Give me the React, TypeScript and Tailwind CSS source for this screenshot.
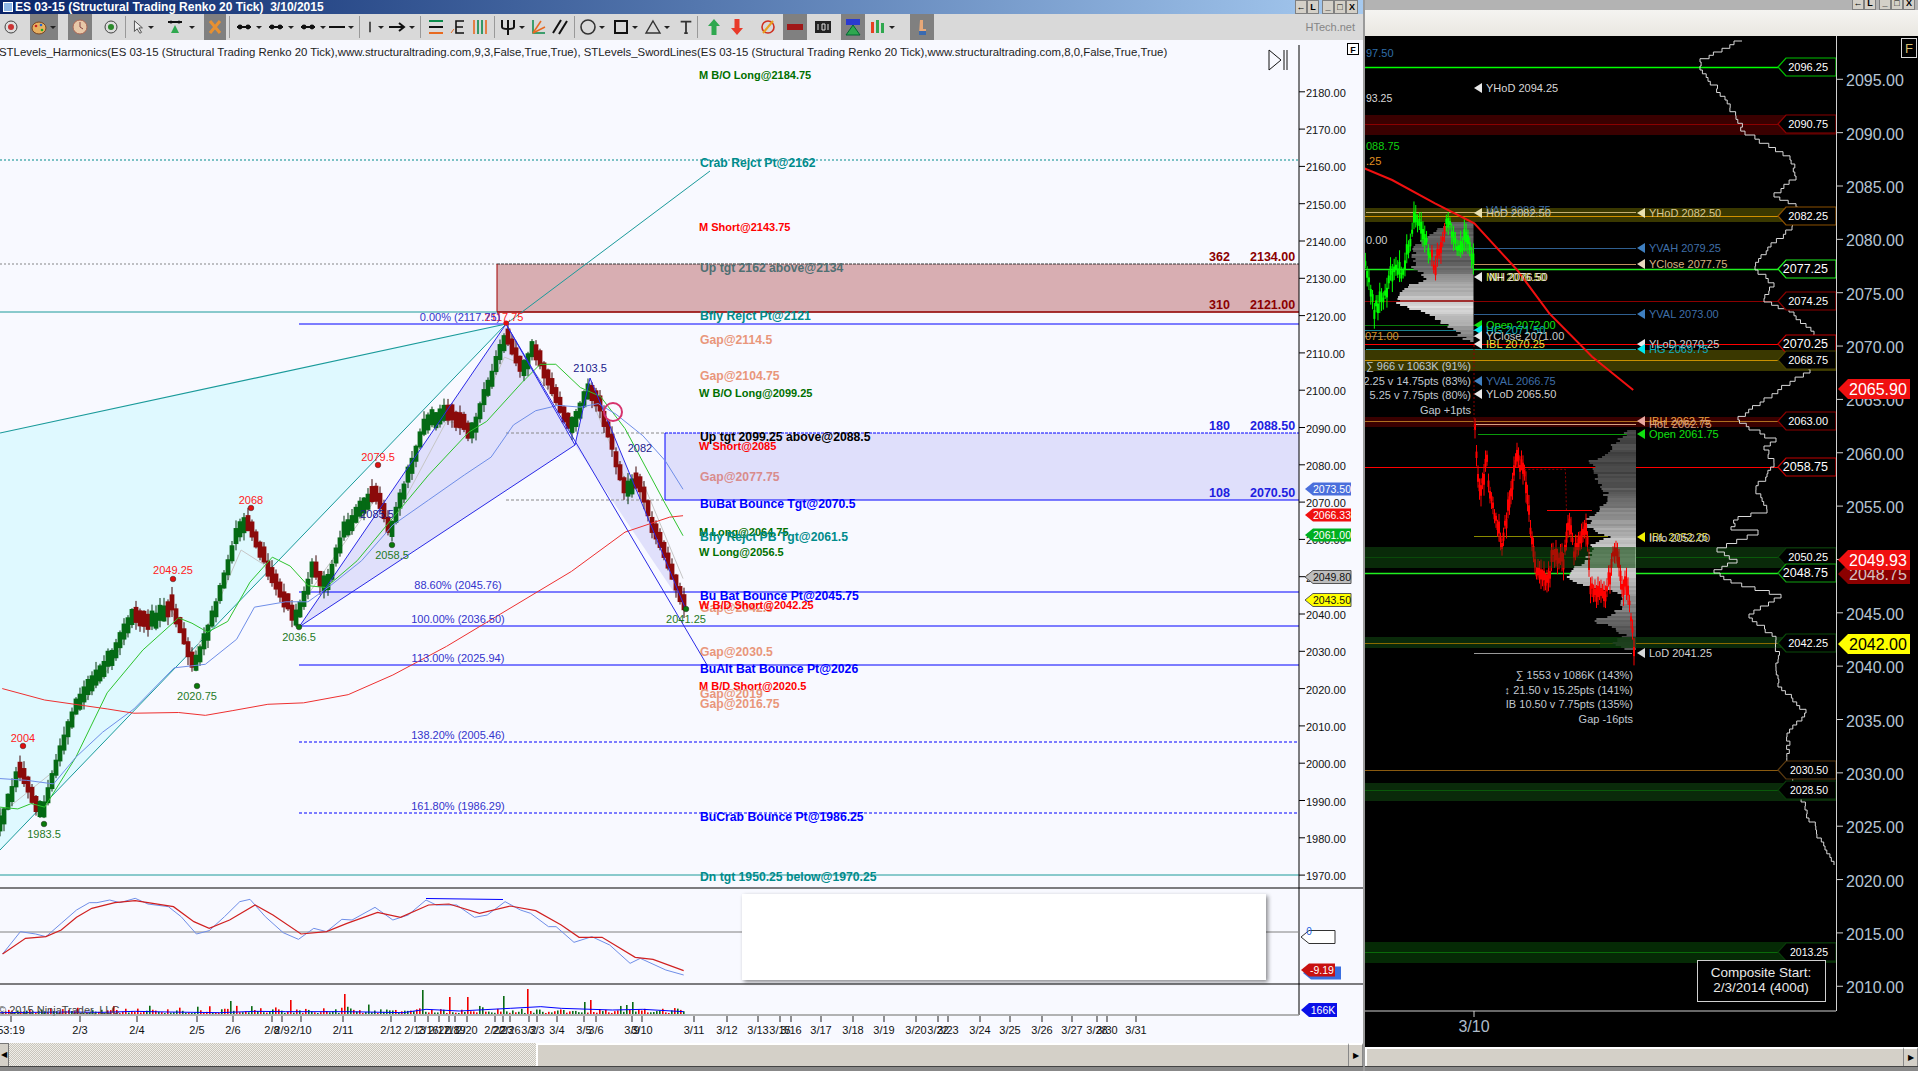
import React from 'react';

// seeded random so every render draws the same bars
const rng = (seed: number) => () => {
    seed = (seed * 1664525 + 1013904223) % 4294967296;
    return seed / 4294967296;
};

type Pt = [number, number];
const lerp = (pts: Pt[], x: number) => {
    for (let i = 1; i < pts.length; i++) {
        if (x <= pts[i][0]) {
            const [x0, y0] = pts[i - 1];
            const [x1, y1] = pts[i];
            return y0 + ((y1 - y0) * (x - x0)) / (x1 - x0 || 1);
        }
    }
    return pts[pts.length - 1][1];
};
const poly = (pts: Pt[]) => pts.map((p) => p.join(',')).join(' ');

// zoomed coords -> page coords
const L = (pts: Pt[]): Pt[] => pts.map(([x, y]) => [x / 2.24, 300 + y / 2.8]);
const O = (pts: Pt[]): Pt[] => pts.map(([x, y]) => [x / 1.96, 880 + y / 3]);
const R5 = (pts: Pt[]): Pt[] => pts.map(([x, y]) => [1360 + x / 2.8, 180 + y / 3]);
const R6 = (pts: Pt[]): Pt[] => pts.map(([x, y]) => [1360 + x / 2.8, 400 + y / 3]);

const priceY = (p: number) => 241 + (2140 - p) * 3.73;
const rightY = (p: number) => 186 + (2085 - p) * 10.67;

const pricePath = L([[0, 1470], [20, 1400], [45, 1310], [60, 1350], [95, 1440], [120, 1330], [170, 1140], [210, 1060], [250, 1000], [300, 880], [340, 900], [385, 850], [435, 1030], [470, 920], [530, 660], [560, 620], [610, 780], [665, 890], [705, 740], [730, 810], [770, 650], [840, 530], [875, 650], [950, 350], [1000, 310], [1060, 370], [1135, 90], [1170, 200], [1195, 130], [1280, 360], [1320, 240], [1345, 290], [1400, 530], [1430, 500], [1460, 620], [1530, 840], [1538, 860]]);

const candles = (() => {
    const r = rng(7);
    const out: { x: number; top: number; h: number; wt: number; wb: number; up: boolean }[] = [];
    for (let x = 0; x < 686; x += 4) {
        const y = lerp(pricePath, x);
        const up = lerp(pricePath, x + 6) < lerp(pricePath, x - 3);
        const yy = y + (r() - 0.5) * 6;
        out.push({ x, top: yy - 8, h: 16, wt: yy - 8 - r() * 8, wb: yy + 8 + r() * 8, up });
    }
    return out;
})();

const greenMa = L([[0, 1420], [40, 1425], [70, 1410], [100, 1420], [170, 1280], [240, 1100], [320, 980], [400, 890], [430, 905], [465, 930], [510, 900], [560, 790], [610, 720], [650, 745], [690, 800], [730, 805], [800, 730], [880, 610], [960, 490], [1050, 370], [1090, 340], [1170, 230], [1210, 180], [1245, 180], [1300, 245], [1345, 270], [1400, 360], [1490, 570], [1530, 660]]);
const blueMa = L([[0, 1340], [60, 1345], [120, 1355], [170, 1280], [230, 1210], [300, 1145], [390, 1030], [460, 1020], [530, 950], [570, 860], [640, 845], [690, 845], [740, 800], [810, 730], [880, 630], [960, 560], [1040, 490], [1100, 440], [1150, 350], [1200, 310], [1250, 295], [1300, 300], [1340, 290], [1380, 320], [1440, 380], [1490, 450], [1530, 530]]);
const redMa = L([[5, 1088], [100, 1120], [240, 1145], [300, 1157], [400, 1155], [460, 1163], [520, 1150], [600, 1132], [680, 1128], [780, 1105], [880, 1050], [1000, 970], [1120, 880], [1280, 760], [1400, 650], [1500, 608], [1530, 604]]);
const grayMa = L([[0, 1440], [120, 1320], [170, 1160], [250, 1020], [300, 900], [385, 870], [430, 1000], [470, 900], [540, 700], [590, 740], [660, 880], [720, 770], [840, 560], [880, 620], [1000, 340], [1060, 350], [1130, 160], [1190, 190], [1280, 340], [1320, 265], [1400, 500], [1440, 510], [1530, 780]]);

const oscBlue = O([[5, 222], [40, 155], [70, 162], [90, 170], [120, 130], [150, 90], [175, 68], [190, 68], [215, 60], [235, 68], [265, 55], [290, 72], [330, 80], [355, 110], [385, 162], [410, 152], [440, 110], [470, 65], [490, 58], [520, 110], [555, 158], [585, 178], [615, 145], [640, 155], [670, 118], [690, 120], [735, 82], [770, 120], [800, 105], [835, 60], [855, 75], [895, 75], [930, 112], [955, 105], [990, 65], [1020, 90], [1040, 100], [1075, 140], [1090, 140], [1125, 187], [1160, 170], [1195, 195], [1235, 250], [1255, 235], [1305, 270], [1340, 285]]);
const oscRed = O([[5, 222], [50, 175], [90, 170], [120, 150], [150, 112], [180, 85], [225, 68], [265, 62], [340, 80], [380, 125], [410, 145], [450, 120], [500, 75], [535, 105], [590, 162], [640, 155], [680, 130], [740, 97], [785, 112], [840, 75], [880, 72], [940, 100], [1000, 78], [1050, 92], [1100, 135], [1135, 172], [1180, 172], [1245, 232], [1280, 238], [1340, 272]]);

const volumes = (() => {
    const r = rng(21);
    const spikes: Record<number, [number, boolean]> = { 112: [8, false], 230: [13, true], 289: [14, false], 343: [20, false], 422: [24, true], 449: [17, false], 467: [17, false], 502: [18, true], 527: [25, false], 589: [14, false], 584: [12, true], 632: [12, true] };
    const out: { x: number; h: number; up: boolean }[] = [];
    for (let x = 2; x < 685; x += 3) {
        const k = Object.keys(spikes).find((s) => Math.abs(Number(s) - x) < 1.6);
        if (k) out.push({ x, h: spikes[Number(k)][0], up: spikes[Number(k)][1] });
        else out.push({ x, h: 1 + r() * r() * 9, up: r() > 0.5 });
    }
    return out;
})();

const dates: [number, string][] = [[11, '53:19'], [80, '2/3'], [137, '2/4'], [197, '2/5'], [233, '2/6'], [272, '2/8'], [282, '2/9'], [301, '2/10'], [343, '2/11'], [391, '2/12'], [415, '2/13'], [428, '2/16'], [439, '2/17'], [449, '2/18'], [455, '2/19'], [467, '2/20'], [495, '2/22'], [503, '2/23'], [510, '2/26'], [529, '3/2'], [537, '3/3'], [557, '3/4'], [584, '3/5'], [596, '3/6'], [632, '3/9'], [642, '3/10'], [694, '3/11'], [727, '3/12'], [758, '3/13'], [780, '3/15'], [791, '3/16'], [821, '3/17'], [853, '3/18'], [884, '3/19'], [916, '3/20'], [938, '3/22'], [948, '3/23'], [980, '3/24'], [1010, '3/25'], [1042, '3/26'], [1072, '3/27'], [1097, '3/28'], [1107, '3/30'], [1136, '3/31']];

const GAP = '#e9967a';
const TEAL = '#008b8b';
const GRN = '#007000';
const RED = '#ff0000';
const BLU = '#0000ff';
const chartLabels: [number, number, string, string][] = [
    [699, 75, 'M B/O Long@2184.75', GRN],
    [700, 163, 'Crab Rejct Pt@2162', TEAL],
    [699, 227, 'M Short@2143.75', RED],
    [700, 268, 'Up tgt 2162 above@2134', '#4f6f72'],
    [700, 316, 'Bfly Rejct Pt@2121', TEAL],
    [700, 340, 'Gap@2114.5', GAP],
    [700, 376, 'Gap@2104.75', GAP],
    [699, 393, 'W B/O Long@2099.25', GRN],
    [700, 437, 'Up tgt 2099.25 above@2088.5', '#000000'],
    [699, 446, 'W Short@2085', RED],
    [700, 477, 'Gap@2077.75', '#d98c8c'],
    [700, 504, 'BuBat Bounce Tgt@2070.5', BLU],
    [699, 532, 'M Long@2064.75', GRN],
    [700, 537, 'Bfly Rejct PB Tgt@2061.5', TEAL],
    [699, 552, 'W Long@2056.5', GRN],
    [700, 608, 'Gap@2042.5', GAP],
    [700, 596, 'Bu Bat Bounce Pt@2045.75', BLU],
    [699, 605, 'W B/D Short@2042.25', RED],
    [700, 652, 'Gap@2030.5', GAP],
    [700, 669, 'BuAlt Bat Bounce Pt@2026', BLU],
    [699, 686, 'M B/D Short@2020.5', RED],
    [700, 694, 'Gap@2019', GAP],
    [700, 704, 'Gap@2016.75', GAP],
    [700, 817, 'BuCrab Bounce Pt@1986.25', BLU],
    [700, 877, 'Dn tgt 1950.25 below@1970.25', TEAL],
];
const fibs: [number, string, boolean][] = [
    [592, '88.60% (2045.76)', false],
    [626, '100.00% (2036.50)', false],
    [665, '113.00% (2025.94)', false],
    [742, '138.20% (2005.46)', true],
    [813, '161.80% (1986.29)', true],
];
const swings: [number, number, string, string, number][] = [
    [378, 457, '2079.5', '#ff2020', 465],
    [251, 500, '2068', '#ff2020', 508],
    [173, 570, '2049.25', '#ff2020', 579],
    [23, 738, '2004', '#ff2020', 746],
    [392, 555, '2058.5', '#1f7a1f', 545],
    [197, 696, '2020.75', '#1f7a1f', 686],
    [299, 637, '2036.5', '#1f7a1f', 627],
    [44, 834, '1983.5', '#1f7a1f', 824],
    [686, 619, '2041.25', '#1f7a1f', 609],
];

const Tag = ({ x, y, w, h, fill, stroke, text, color, fs }: { x: number; y: number; w: number; h: number; fill: string; stroke?: string; text: string; color: string; fs: number }) => (
    <g>
        <polygon points={`${x},${y} ${x + 8},${y - h / 2} ${x + w},${y - h / 2} ${x + w},${y + h / 2} ${x + 8},${y + h / 2}`} fill={fill} stroke={stroke ?? 'none'} />
        <text x={x + (w + 8) / 2} y={y + fs * 0.36} fontSize={fs} fill={color} textAnchor="middle">{text}</text>
    </g>
);

const LeftChart = () => (
    <svg viewBox="0 40 1363 1003" className="block h-full w-full">
        <polygon points="0,433 506,324 0,850" fill="#dff9ff" />
        <polygon points={poly([[299, 627], [506, 324], [575, 445]])} fill="#e0e0fb" />
        <polygon points={poly([[590, 378], [575, 445], [686, 610]])} fill="#e0e0fb" />
        <rect x="497" y="264" width="802" height="48" fill="#d8aeb2" />
        <rect x="665" y="433" width="634" height="67" fill="#dfdffb" />

        <line x1="0" y1="160" x2="1299" y2="160" stroke={TEAL} strokeDasharray="2 2" />
        <line x1="0" y1="264" x2="497" y2="264" stroke="#555" strokeDasharray="2 2" strokeWidth="0.7" />
        <line x1="497" y1="264" x2="1299" y2="264" stroke="#333" strokeDasharray="3 1" />
        <line x1="497" y1="264" x2="497" y2="312" stroke="#a00000" />
        <line x1="0" y1="312" x2="1299" y2="312" stroke="#1a9a9a" />
        <line x1="497" y1="312" x2="1299" y2="312" stroke="#b00000" strokeWidth="1.5" />
        <line x1="299" y1="324" x2="1299" y2="324" stroke={BLU} />
        <line x1="506" y1="433" x2="665" y2="433" stroke="#888" strokeDasharray="3 2" />
        <line x1="506" y1="500" x2="665" y2="500" stroke="#888" strokeDasharray="3 2" />
        <line x1="665" y1="433" x2="1299" y2="433" stroke={BLU} strokeDasharray="3 1" />
        <line x1="665" y1="500" x2="1299" y2="500" stroke={BLU} />
        <line x1="665" y1="433" x2="665" y2="500" stroke={BLU} />
        {fibs.map(([y, , dash]) => (
            <line key={y} x1="299" y1={y} x2="1299" y2={y} stroke={BLU} strokeDasharray={dash ? '3 2' : undefined} />
        ))}
        <line x1="0" y1="875" x2="1299" y2="875" stroke="#1a9a9a" />

        <line x1="0" y1="433" x2="506" y2="324" stroke="#1a9a9a" strokeWidth="1.2" />
        <polyline points="0,850 506,324 710,171" fill="none" stroke="#1a9a9a" />

        <polyline points={poly(grayMa)} fill="none" stroke="#c6c6c6" />
        {candles.map((c, i) => (
            <g key={i}>
                <line x1={c.x} y1={c.wt} x2={c.x} y2={c.wb} stroke={c.up ? '#04340c' : '#3a0505'} />
                <rect x={c.x - 2.4} y={c.top} width="4.8" height={c.h} fill={c.up ? '#046a14' : '#8b0a0a'} />
            </g>
        ))}
        <polyline points={poly(greenMa)} fill="none" stroke="#2ec42e" />
        <polyline points={poly(blueMa)} fill="none" stroke="#6f8ee8" />
        <polyline points={poly(redMa)} fill="none" stroke="#ee3030" />

        <polyline points={poly([[299, 627], [506, 324], [575, 445], [299, 627]])} fill="none" stroke="#2a2ae6" />
        <polyline points={poly([[506, 324], [707, 665]])} fill="none" stroke="#2a2ae6" />
        <polyline points={poly([[575, 445], [590, 378], [686, 610]])} fill="none" stroke="#2a2ae6" />
        <circle cx="613" cy="412" r="9" fill="none" stroke="#d6336c" strokeWidth="2" />

        <circle cx="506" cy="323" r="2.6" fill="#e01010" />
        {swings.map(([x, y, t, c, dy]) => (
            <g key={t}>
                <circle cx={x} cy={dy} r="2.8" fill={c === '#ff2020' ? '#e01010' : '#0a7a0a'} stroke="#222" strokeWidth="0.5" />
                <text x={x} y={y + 4} fontSize="11" fill={c} textAnchor="middle">{t}</text>
            </g>
        ))}
        <text x="504" y="321" fontSize="11" fill="#ff2020" textAnchor="middle">2117.75</text>
        <text x="590" y="372" fontSize="11" fill="#20208c" textAnchor="middle">2103.5</text>
        <text x="640" y="452" fontSize="11" fill="#20208c" textAnchor="middle">2082</text>
        <text x="377" y="518" fontSize="11" fill="#20208c" textAnchor="middle">2085.5</text>
        <text x="460" y="321" fontSize="11" fill="#3333cc" textAnchor="middle">0.00% (2117.75)</text>
        {fibs.map(([y, t]) => (
            <text key={t} x="458" y={y - 3} fontSize="11" fill="#3333cc" textAnchor="middle">{t}</text>
        ))}

        {chartLabels.map(([x, y, t, c]) => (
            <text key={t} x={x} y={y + 4} fontSize={x === 700 ? 12.2 : 11} fontWeight="700" fill={c}>{t}</text>
        ))}

        {[[362, '2134.00', 256, '#8b0000'], [310, '2121.00', 304, '#8b0000'], [180, '2088.50', 425, '#2020e0'], [108, '2070.50', 492, '#2020e0']].map(([n, p, y, c]) => (
            <g key={String(p)} fontSize="12.5" fontWeight="700" fill={String(c)}>
                <text x="1209" y={Number(y) + 5}>{n}</text>
                <text x="1250" y={Number(y) + 5}>{p}</text>
            </g>
        ))}

        {/* price axis */}
        <line x1="1299" y1="45" x2="1299" y2="1015" stroke="#000" />
        {Array.from({ length: 22 }, (_, i) => 2180 - i * 10).map((p) => (
            <g key={p}>
                <line x1="1299" y1={priceY(p)} x2="1305" y2={priceY(p)} stroke="#000" />
                <text x="1306" y={priceY(p) + 5} fontSize="11" fill="#111">{p}.00</text>
            </g>
        ))}
        <Tag x={1305} y={489} w={46} h={13} fill="#4a6fdc" text="2073.50" color="#fff" fs={10.5} />
        <Tag x={1305} y={515} w={46} h={13} fill="#f01010" text="2066.33" color="#fff" fs={10.5} />
        <Tag x={1305} y={535} w={46} h={13} fill="#00b020" text="2061.00" color="#fff" fs={10.5} />
        <Tag x={1305} y={577} w={46} h={13} fill="#bdbdbd" stroke="#555" text="2049.80" color="#111" fs={10.5} />
        <Tag x={1305} y={600} w={46} h={13} fill="#ffff00" stroke="#555" text="2043.50" color="#111" fs={10.5} />

        {/* skip to end and F */}
        <polygon points="1269,50 1281,60 1269,70" fill="none" stroke="#111" />
        <line x1="1284" y1="50" x2="1284" y2="70" stroke="#111" />
        <line x1="1287" y1="50" x2="1287" y2="70" stroke="#111" />
        <rect x="1347.5" y="43.5" width="11" height="11" fill="#fff" stroke="#000" />
        <text x="1353" y="52.5" fontSize="9" textAnchor="middle" fill="#000" fontWeight="700">F</text>

        {/* oscillator panel */}
        <line x1="0" y1="888" x2="1363" y2="888" stroke="#000" strokeWidth="1.2" />
        <line x1="0" y1="932" x2="1300" y2="932" stroke="#808080" />
        <rect x="742" y="894" width="524" height="86" fill="#fff" className="drop-shadow-[2px_2px_2px_rgba(0,0,0,0.45)]" />
        <line x1="426" y1="898.5" x2="503" y2="899.5" stroke={BLU} />
        <polyline points={poly(oscBlue)} fill="none" stroke="#6f8ee8" />
        <polyline points={poly(oscRed)} fill="none" stroke="#d02020" strokeWidth="1.2" />
        <Tag x={1301} y={937} w={34} h={13} fill="#fff" stroke="#333" text="" color="#2060e0" fs={10} />
        <text x="1309" y="935" fontSize="10" fill="#2060e0" textAnchor="middle">0</text>
        <Tag x={1303} y={973} w={38} h={13} fill="#3a6fe0" text="" color="#fff" fs={10} />
        <Tag x={1301} y={970} w={34} h={13} fill="#c81010" text="-9.19" color="#fff" fs={10.5} />

        {/* volume panel */}
        <line x1="0" y1="984" x2="1363" y2="984" stroke="#000" strokeWidth="1.2" />
        {volumes.map((v, i) => (
            <rect key={i} x={v.x} y={1014 - v.h} width="1.6" height={v.h} fill={v.up ? '#0a6a14' : '#f00000'} />
        ))}
        <polyline points={poly(O([[0, 398], [130, 396], [200, 397], [265, 394], [330, 396], [430, 398], [500, 394], [560, 395], [680, 395], [790, 398], [835, 388], [900, 393], [1000, 385], [1060, 380], [1100, 385], [1200, 390], [1260, 388], [1340, 395]]))} fill="none" stroke={BLU} />
        <text x="-2" y="1014" fontSize="11" fill="#444">© 2015 NinjaTrader, LLC</text>
        <Tag x={1301} y={1010} w={36} h={14} fill="#0a10e8" text="166K" color="#fff" fs={10.5} />

        {/* date axis */}
        <line x1="0" y1="1015" x2="1299" y2="1015" stroke="#9a9a9a" strokeWidth="1.4" />
        {dates.map(([x, t]) => (
            <g key={t}>
                <line x1={x} y1="1016" x2={x} y2="1022" stroke="#222" />
                <text x={x} y="1034" fontSize="11" fill="#111" textAnchor="middle">{t}</text>
            </g>
        ))}
    </svg>
);

// volume profile bars from an outline of left edges
const Profile = ({ edge, right, top, bottom, dark, light }: { edge: Pt[]; right: number; top: number; bottom: number; dark: number; light: number }) => {
    const bars = [];
    const r = rng(top);
    const center = top + (bottom - top) * light;
    for (let y = top; y < bottom; y += 2) {
        const left = lerp(edge.map(([a, b]): Pt => [b, a]), y) + (r() - 0.5) * 7;
        const t = Math.max(0, 1 - Math.abs(y - center) / ((bottom - top) * 0.35));
        const v = Math.round(dark + t * (225 - dark) + (r() - 0.5) * 24);
        bars.push(<rect key={y} x={left} y={y} width={right - left} height="2" fill={`rgb(${v},${v},${v})`} />);
    }
    return <g>{bars}</g>;
};

const sticks = (pts: Pt[], color: (x: number) => string, seed: number, step: number) => {
    const r = rng(seed);
    const out = [];
    for (let x = pts[0][0]; x <= pts[pts.length - 1][0]; x += step) {
        const y = lerp(pts, x) + (r() - 0.5) * 12;
        const h = 4 + r() * 8;
        out.push(
            <g key={x}>
                <line x1={x} y1={y - h - r() * 6} x2={x} y2={y + h + r() * 6} stroke={color(x)} />
                <rect x={x - 1} y={y - h / 2} width="2" height={h} fill={color(x)} />
            </g>,
        );
    }
    return out;
};

const stepped = (pts: Pt[], seed: number) => {
    const r = rng(seed);
    let d = `M${pts[0][0]} ${pts[0][1]}`;
    for (let i = 1; i < pts.length; i++) {
        const [x0, y0] = pts[i - 1];
        const [x1, y1] = pts[i];
        const n = Math.max(1, Math.round(Math.abs(y1 - y0) / 4));
        for (let k = 1; k <= n; k++) {
            const xx = x0 + ((x1 - x0) * k) / n + (k < n ? (r() - 0.5) * 5 : 0);
            d += `H${xx.toFixed(1)}V${(y0 + ((y1 - y0) * k) / n).toFixed(1)}`;
        }
    }
    return d;
};

const compositeProfile: Pt[] = [[1742, 41], [1722, 52], [1700, 62], [1700, 70], [1725, 100], [1745, 135], [1790, 160], [1796, 180], [1774, 197], [1796, 207], [1792, 230], [1771, 247], [1755, 270], [1774, 287], [1764, 302], [1789, 312], [1814, 335], [1810, 373], [1764, 402], [1738, 420], [1749, 430], [1776, 442], [1764, 450], [1774, 467], [1767, 477], [1756, 490], [1767, 513], [1738, 520], [1731, 530], [1758, 535], [1717, 552], [1737, 563], [1714, 573], [1731, 583], [1781, 598], [1749, 618], [1776, 640], [1778, 663], [1778, 687], [1806, 713], [1787, 737], [1790, 770], [1805, 810], [1825, 850], [1834, 865]];

const bands: [number, number, string][] = [
    [115, 135, '#3a0000'], [208, 222, '#3a3800'], [350, 371, '#3a3800'], [417, 427, '#3a0000'], [547, 568, '#0a2a0a'], [637, 648, '#0a2a0a'], [783, 801, '#0a2a0a'], [942, 963, '#052a05'],
];
const rLines: [number, string, number?, number?][] = [
    [67, '#00ff00'], [124, '#8b0000'], [216, '#d09000'], [269, '#20f020'], [301, '#8b0000'], [344, '#ff0000'], [360, '#c89000'], [421, '#b07020'], [467, '#ff0000'], [557, '#0a5a0a'], [573, '#20f020'], [643, '#8a6a00'], [770, '#8a5a10'], [790, '#0a5a0a'], [952, '#0a6a0a'],
    [212, '#c8b070', 1366, 1636], [248, '#2f5f90', 1474, 1636], [264, '#c09060', 1474, 1636], [314, '#2f5f90', 1474, 1636], [349, '#20a0a0', 1366, 1636], [325, '#0a7a0a', 1365, 1476], [330, '#1a8090', 1365, 1476], [336, '#777', 1365, 1476], [424, '#d8a080', 1476, 1636], [434, '#0a9a0a', 1478, 1627], [536, '#8a8a00', 1474, 1608], [653, '#999', 1474, 1632], [510, '#ff0000', 1547, 1592],
];
const rTags: [number, string, string, string, number][] = [
    [67, '2096.25', '#00c000', '#000', 11], [124, '2090.75', '#8b0000', '#000', 11], [216, '2082.25', '#8b5000', '#000', 11], [269, '2077.25', '#20f020', '#000', 12.5], [301, '2074.25', '#8b0000', '#000', 11], [344, '2070.25', '#c00000', '#000', 12.5], [360, '2068.75', '#4a4500', '#000', 11], [421, '2063.00', '#8b0000', '#000', 11], [467, '2058.75', '#c00000', '#000', 12.5], [557, '2050.25', '#0a3a0a', '#000', 11], [573, '2048.75', '#10a010', '#000', 12.5], [643, '2042.25', '#0a4a0a', '#000', 11], [770, '2030.50', '#5a3a10', '#000', 10.5], [790, '2028.50', '#0a3a0a', '#000', 10.5], [952, '2013.25', '#0a3a0a', '#000', 10.5],
];
const rLabels: [number, number, string, string, string?][] = [
    [1487, 88, 'YHoD 2094.25', '#d8d8d8', '#e8e8e8'],
    [1650, 213, 'YHoD 2082.50', '#d8c890', '#e8e0b0'],
    [1487, 210, 'VAH 2082.75', '#3f6fa8'],
    [1487, 213, 'HoD 2082.50', '#d8c890', '#e8e0b0'],
    [1650, 248, 'YVAH 2079.25', '#3f6fa8', '#3f7fc0'],
    [1650, 264, 'YClose 2077.75', '#d8b080', '#e8d8c0'],
    [1487, 277, 'MH 2076.50', '#e8e040', '#e8e8e8'],
    [1490, 277, 'NH 2076.50', '#e8e8e8'],
    [1650, 314, 'YVAL 2073.00', '#3f6fa8', '#3f7fc0'],
    [1487, 325, 'Open 2072.00', '#10e010', '#10e010'],
    [1487, 330, 'HG 2071.50', '#10b0c0', '#00e8f0'],
    [1487, 336, 'YClose 2071.00', '#c8c8c8', '#e8e8e8'],
    [1487, 344, 'IBL 2070.25', '#e8e040', '#e8e8e8'],
    [1650, 344, 'YLoD 2070.25', '#d0d0d0', '#e8e8e8'],
    [1650, 349, 'HG 2069.75', '#10b0c0', '#00e8f0'],
    [1487, 381, 'YVAL 2066.75', '#3f6fa8', '#3f7fc0'],
    [1487, 394, 'YLoD 2065.50', '#d0d0d0', '#e8e8e8'],
    [1650, 421, 'IBH 2062.75', '#e8a040', '#e8a8a0'],
    [1650, 424, 'HoL 2062.75', '#d8a080'],
    [1650, 434, 'Open 2061.75', '#10e010', '#10e010'],
    [1650, 537, 'IBL 2052.25', '#e8e040', '#f0f000'],
    [1650, 538, 'Info 2052.00', '#c8c8c8'],
    [1650, 653, 'LoD 2041.25', '#d0d0d0', '#d8d8d8'],
];
const statLines: [number, string][] = [[366, '∑ 966 v 1063K (91%)'], [381, '2.25 v 14.75pts (83%)'], [395, '5.25 v 7.75pts (80%)'], [410, 'Gap +1pts'], [675, '∑ 1553 v 1086K (143%)'], [690, '↕ 21.50 v 15.25pts (141%)'], [704, 'IB 10.50 v 7.75pts (135%)'], [719, 'Gap -16pts']];

const RightChart = () => (
    <svg viewBox="1365 36 553 1011" className="block h-full w-full">
        <rect x="1365" y="36" width="553" height="1011" fill="#000" />
        {bands.map(([a, b, c]) => (
            <rect key={a} x="1365" y={a} width="471" height={b - a} fill={c} />
        ))}
        {rLines.map(([y, c, a, b]) => (
            <line key={`${y}${c}`} x1={a ?? 1365} y1={y + 0.5} x2={b ?? 1778} y2={y + 0.5} stroke={c} strokeWidth={y === 269 || y === 573 || y === 67 ? 1.4 : 1} />
        ))}

        <Profile edge={R5([[250, 130], [215, 150], [165, 180], [150, 220], [150, 260], [190, 290], [110, 330], [110, 370], [190, 400], [240, 430], [280, 460], [316, 490]])} right={1473.5} top={222} bottom={344} dark={95} light={0.68} />
        <rect x="1400" y="300" width="74" height="2" fill="#a03030" />
        <Profile edge={R6([[750, 90], [710, 130], [690, 160], [640, 185], [660, 210], [660, 240], [690, 280], [680, 320], [640, 355], [640, 380], [700, 410], [650, 430], [640, 470], [590, 510], [580, 530], [610, 550], [720, 575], [740, 610], [710, 640], [650, 660], [700, 675], [740, 700], [710, 730], [760, 750]])} right={1636} top={430} bottom={650} dark={72} light={0.58} />
        <rect x="1590" y="547" width="46" height="21" fill="#1a6a1a" fillOpacity="0.45" />
        <rect x="1600" y="637" width="36" height="11" fill="#0a3a0a" fillOpacity="0.7" />

        {sticks(R5([[15, 260], [40, 395], [70, 340], [90, 270], [120, 280], [140, 180], [155, 110], [190, 200], [210, 260], [235, 150], [250, 130], [270, 210], [300, 170], [318, 250]]), (x) => (x > 1431 && x < 1445 ? '#ff0000' : '#00ff00'), 9, 1.8)}
        {sticks(R6([[322, 90], [330, 240], [340, 265], [355, 180], [365, 300], [385, 380], [400, 430], [425, 250], [440, 165], [460, 230], [480, 400], [495, 520], [525, 555], [540, 460], [570, 490], [585, 370], [600, 465], [635, 385], [645, 570], [690, 580], [715, 430], [735, 555], [752, 570], [768, 760]]), () => '#ff0000', 33, 1.5)}
        <rect x="1365" y="547" width="270" height="21" fill="#0a2a0a" fillOpacity="0.35" />
        <polyline points={poly(R6([[460, 208], [575, 208], [578, 330]]))} fill="none" stroke="#8b0000" strokeDasharray="2 2" />

        <polyline points={poly(R5([[-10, -45], [90, 0], [210, 70], [320, 130], [440, 270], [530, 400], [650, 530], [765, 630]]))} fill="none" stroke="#f01010" strokeWidth="2" />
        <line x1="1474" y1="345" x2="1474" y2="430" stroke="#8b0000" strokeDasharray="2 2" />

        <path d={stepped(compositeProfile, 5)} fill="none" stroke="#d8d8d8" />

        {rTags.map(([y, t, s, f, fs]) => (
            <g key={t}>
                <polygon points={`1778,${y} 1786,${y - 9} 1836,${y - 9} 1836,${y + 9} 1786,${y + 9}`} fill={f} stroke={s} strokeWidth="1.2" />
                <text x="1828" y={y + 4} fontSize={fs} fill="#fff" textAnchor="end">{t}</text>
            </g>
        ))}

        {rLabels.map(([x, y, t, c, arrow]) => (
            <g key={t + x}>
                {arrow && <polygon points={`${x - 13},${y} ${x - 5},${y - 5} ${x - 5},${y + 5}`} fill={arrow} />}
                <text x={x - 1} y={y + 4} fontSize="11" fill={c}>{t}</text>
            </g>
        ))}
        <text x="1366" y="57" fontSize="11" fill="#2f6ea8">97.50</text>
        <text x="1366" y="102" fontSize="10.5" fill="#d8d8d8">93.25</text>
        <text x="1366" y="150" fontSize="11" fill="#10d010">088.75</text>
        <text x="1366" y="165" fontSize="11" fill="#e09020">.25</text>
        <text x="1366" y="244" fontSize="11" fill="#d0d0d0">0.00</text>
        <text x="1365" y="340" fontSize="11" fill="#d89020">071.00</text>
        {statLines.map(([y, t]) => (
            <text key={y} x={y < 500 ? 1471 : 1633} y={y + 4} fontSize="11" fill="#c0c8d0" textAnchor="end">{t}</text>
        ))}

        {/* axis */}
        <line x1="1836.5" y1="36" x2="1836.5" y2="1011" stroke="#d0d0d0" />
        <line x1="1365" y1="1011" x2="1836" y2="1011" stroke="#d0d0d0" />
        <line x1="1474" y1="1011" x2="1474" y2="1017" stroke="#d0d0d0" />
        <text x="1474" y="1032" fontSize="16" fill="#aebccb" textAnchor="middle">3/10</text>
        {Array.from({ length: 18 }, (_, i) => 2095 - i * 5).map((p) => (
            <g key={p}>
                <line x1="1837" y1={rightY(p)} x2="1843" y2={rightY(p)} stroke="#d0d0d0" />
                <text x="1846" y={rightY(p) + 7} fontSize="16" fill="#b4c4d4">{p}.00</text>
            </g>
        ))}
        {[[389, '2065.90', '#f01010', '#fff'], [574, '2048.75', '#8b0000', '#d8c0c0'], [560, '2049.93', '#f01010', '#fff'], [644, '2042.00', '#ffff00', '#000']].map(([y, t, f, c]) => (
            <g key={String(t)}>
                <polygon points={`1838,${y} 1848,${Number(y) - 10} 1910,${Number(y) - 10} 1910,${Number(y) + 10} 1848,${Number(y) + 10}`} fill={String(f)} />
                <text x="1849" y={Number(y) + 6} fontSize="16" fill={String(c)}>{t}</text>
            </g>
        ))}
        <rect x="1901.5" y="38.5" width="15" height="19" fill="#000" stroke="#d8d8d8" />
        <text x="1909" y="53" fontSize="13" fill="#d8c070" textAnchor="middle">F</text>

        <rect x="1697.5" y="960.5" width="128" height="41" fill="#000" stroke="#d0d0d0" />
        <text x="1761" y="977" fontSize="13.5" fill="#e8e8e8" textAnchor="middle">Composite Start:</text>
        <text x="1761" y="992" fontSize="13.5" fill="#e8e8e8" textAnchor="middle">2/3/2014 (400d)</text>
    </svg>
);

const WinBtn = ({ children }: { children: React.ReactNode }) => (
    <span className="flex h-[14px] w-[12px] items-center justify-center border border-[#808080] bg-[#d4d0c8] text-[9px] leading-none font-bold text-black">{children}</span>
);

const Dd = () => (
    <svg viewBox="0 0 10 18" className="h-[18px] w-[10px]"><polygon points="2,8 8,8 5,11" fill="#222" /></svg>
);
const Sep = () => <span className="mx-[3px] h-[22px] w-[2px] border-l border-[#999] border-r-white" />;
const Ico = ({ children }: { children: React.ReactNode }) => <svg viewBox="0 0 18 18" className="h-[18px] w-[18px]" fill="none">{children}</svg>;

const Dumb = () => (
    <Ico>
        <line x1="2" y1="9" x2="16" y2="9" stroke="#111" strokeWidth="2" />
        <circle cx="5" cy="9" r="2.4" fill="#111" />
        <circle cx="13" cy="9" r="2.4" fill="#111" />
    </Ico>
);

const Toolbar = () => (
    <div className="flex h-[26px] items-center bg-[#d9d9d9]">
        <span className="flex w-[30px] justify-start pl-[2px]"><Ico><circle cx="9" cy="9" r="6" fill="#ddd" stroke="#444" /><circle cx="9" cy="9" r="3" fill="#c33" /></Ico></span>
        <span className="flex h-[26px] w-[28px] items-center bg-[#808080]"><Ico><ellipse cx="9" cy="10" rx="7" ry="6" fill="#e8b060" stroke="#742" /><circle cx="6" cy="8" r="1.3" fill="#c22" /><circle cx="11" cy="7" r="1.3" fill="#26c" /><circle cx="12" cy="12" r="1.3" fill="#2a2" /></Ico><Dd /></span>
        <span className="ml-[10px] flex h-[26px] w-[24px] items-center justify-center bg-[#808080]"><Ico><circle cx="9" cy="9" r="7" fill="#e8c8a8" stroke="#a65" /><path d="M9 4V9L12 11" stroke="#844" /></Ico></span>
        <span className="ml-[8px] flex w-[22px] justify-center"><Ico><circle cx="9" cy="9" r="6" fill="#ddd" stroke="#444" /><circle cx="9" cy="9" r="3" fill="#2a8a2a" /></Ico></span>
        <Sep />
        <span className="flex w-[16px] justify-center"><Ico><path d="M5 2V14L8 11L11 16L13 15L10 10L14 10Z" fill="#eee" stroke="#444" /></Ico></span>
        <Dd />
        <span className="ml-[7px] flex w-[24px] justify-center"><Ico><path d="M9 7L5 15H13Z" fill="#2fa84f" /><line x1="2" y1="4" x2="16" y2="4" stroke="#111" strokeWidth="2" /><circle cx="5" cy="4" r="1.6" fill="#111" /><circle cx="13" cy="4" r="1.6" fill="#111" /></Ico></span>
        <Dd />
        <span className="ml-[7px] flex h-[26px] w-[22px] items-center justify-center bg-[#808080]"><Ico><path d="M4 3L14 15M14 3L4 15" stroke="#e89030" strokeWidth="3" /></Ico></span>
        <Sep />
        <span className="flex w-[20px] justify-center"><Dumb /></span><Dd />
        <span className="ml-[2px] flex w-[20px] justify-center"><Dumb /></span><Dd />
        <span className="ml-[2px] flex w-[20px] justify-center"><Dumb /></span><Dd />
        <span className="flex w-[18px] justify-center"><Ico><line x1="1" y1="9" x2="17" y2="9" stroke="#111" strokeWidth="2" /></Ico></span><Dd />
        <Sep />
        <span className="flex w-[12px] justify-center"><Ico><line x1="9" y1="1" x2="9" y2="17" stroke="#111" strokeWidth="2" /></Ico></span><Dd />
        <span className="ml-[1px] flex w-[20px] justify-center"><Ico><path d="M1 9H15M11 5L16 9L11 13" stroke="#111" strokeWidth="2" /></Ico></span><Dd />
        <Sep />
        <span className="flex w-[22px] justify-center"><Ico><path d="M2 3H16" stroke="#0a8a4a" strokeWidth="2" /><path d="M2 9H16" stroke="#111" strokeWidth="2" /><path d="M2 15H16" stroke="#e86a20" strokeWidth="2" /></Ico></span>
        <span className="flex w-[22px] justify-center"><Ico><path d="M15 3H7V15H15M7 9H14" stroke="#111" strokeWidth="1.6" /><path d="M2 15L5 11" stroke="#e86a20" /></Ico></span>
        <span className="flex w-[22px] justify-center"><Ico><path d="M3 2V16" stroke="#e86a20" strokeWidth="1.6" /><path d="M7 2V16" stroke="#0a8a4a" strokeWidth="1.6" /><path d="M11 2V16" stroke="#0a8a4a" strokeWidth="1.6" /><path d="M15 2V16" stroke="#e86a20" strokeWidth="1.6" /></Ico></span>
        <Sep />
        <span className="flex w-[18px] justify-center"><Ico><path d="M3 2V9Q3 11 9 11Q15 11 15 9V2M9 2V17" stroke="#111" strokeWidth="2" /></Ico></span><Dd />
        <span className="flex w-[22px] justify-center"><Ico><path d="M4 2V15H16" stroke="#0a8a4a" strokeWidth="1.5" /><path d="M4 15L12 3" stroke="#e86a20" strokeWidth="1.5" /><path d="M4 15L16 9" stroke="#e86a20" strokeWidth="1.5" /></Ico></span>
        <span className="flex w-[22px] justify-center"><Ico><path d="M2 15L10 2M8 16L16 3" stroke="#111" strokeWidth="2" /></Ico></span>
        <Sep />
        <span className="flex w-[18px] justify-center"><Ico><circle cx="9" cy="9" r="7" stroke="#333" strokeWidth="1.6" /></Ico></span><Dd />
        <span className="ml-[5px] flex w-[18px] justify-center"><Ico><rect x="3" y="3" width="12" height="12" stroke="#111" strokeWidth="2" /></Ico></span><Dd />
        <span className="ml-[4px] flex w-[18px] justify-center"><Ico><path d="M9 3L16 15H2Z" stroke="#333" strokeWidth="1.4" /></Ico></span><Dd />
        <span className="ml-[6px] flex w-[16px] justify-center"><Ico><path d="M3 3H15M9 3V16M7 16H11" stroke="#333" strokeWidth="2" /></Ico></span>
        <Sep />
        <span className="flex w-[24px] justify-center"><Ico><path d="M9 1L15 8H11.5V17H6.5V8H3Z" fill="#2fa84f" /></Ico></span>
        <span className="flex w-[22px] justify-center"><Ico><path d="M9 17L15 10H11.5V1H6.5V10H3Z" fill="#e83a2a" /></Ico></span>
        <span className="ml-[9px] flex w-[22px] justify-center"><Ico><circle cx="9" cy="9" r="6" stroke="#d03020" strokeWidth="1.6" /><path d="M4 15L14 3" stroke="#e8a020" strokeWidth="2" /></Ico></span>
        <span className="ml-[4px] flex h-[26px] w-[24px] items-center justify-center bg-[#808080]"><Ico><rect x="1" y="6" width="16" height="6" fill="#a01818" /></Ico></span>
        <span className="ml-[4px] flex w-[24px] justify-center"><Ico><rect x="1" y="3" width="16" height="12" fill="#222" /><path d="M4 6V12M8 6H11V12H8ZM14 6V12" stroke="#ddd" /></Ico></span>
        <span className="ml-[6px] flex h-[26px] w-[24px] items-center justify-center bg-[#808080]"><Ico><rect x="2" y="1" width="14" height="6" fill="#2a3ad0" /><path d="M9 7L16 17H2Z" fill="#2fa84f" stroke="#063" /></Ico></span>
        <span className="ml-[2px] flex w-[20px] justify-center"><Ico><rect x="3" y="4" width="3" height="11" fill="#e84020" /><rect x="8" y="2" width="3" height="13" fill="#2fa84f" /><rect x="13" y="5" width="3" height="10" fill="#2fa84f" /></Ico></span><Dd />
        <span className="ml-[13px] flex h-[26px] w-[24px] items-center justify-center bg-[#808080]"><Ico><path d="M7 2H10V11H13V16H6Z" fill="#e8a878" /><rect x="6" y="13" width="7" height="4" fill="#3a6ab0" /></Ico></span>
        <span className="ml-auto pr-[8px] text-[11px] text-[#858585]">HTech.net</span>
    </div>
);

const Scrollbar = ({ track }: { track: boolean }) => (
    <div className="flex h-full">
        {track && (
            <>
                <span className="flex w-[9px] items-center justify-center border-t border-r border-[#777] bg-[#d4d0c8] text-[8px] text-black">◀</span>
                <span className="w-[527px] bg-[#d4d0c8] bg-[repeating-conic-gradient(#c8c5bd_0_25%,#f0eee8_0_50%)] bg-[length:2px_2px]" />
            </>
        )}
        <span className="flex-1 border-t-2 border-l-2 border-white bg-[#d4d0c8]" />
        <span className="flex w-[15px] items-center justify-center border-t-2 border-r border-l border-[#888] border-t-white bg-[#d4d0c8] text-[8px] text-black">▶</span>
    </div>
);

const App = () => {
    return (
        <div className="flex h-[1071px] w-[1918px] overflow-hidden bg-[#c8c8c8] font-['Liberation_Sans',Arial,sans-serif]">
            <div className="flex w-[1363px] flex-col">
                <div className="flex h-[14px] items-center justify-between overflow-hidden bg-gradient-to-r from-[#0a246a] to-[#a6caf0] text-[12px] font-bold text-white">
                    <div className="flex items-center">
                        <span className="mr-[2px] ml-[3px] h-[10px] w-[10px] border border-white bg-[#8fb8e8]" />
                        <span className="whitespace-pre">ES 03-15 (Structural Trading Renko 20 Tick)  3/10/2015</span>
                    </div>
                    <div className="mr-[5px] flex gap-[3px]">
                        <div className="flex"><WinBtn>←</WinBtn><WinBtn>L</WinBtn></div>
                        <div className="flex"><WinBtn>_</WinBtn><WinBtn>□</WinBtn><WinBtn>X</WinBtn></div>
                    </div>
                </div>
                <Toolbar />
                <div className="relative h-[1003px] bg-[#f8f9ff]">
                    <div className="absolute top-[4px] left-[-1px] text-[11.4px] whitespace-nowrap text-[#222]">STLevels_Harmonics(ES 03-15 (Structural Trading Renko 20 Tick),www.structuraltrading.com,9,3,False,True,True), STLevels_SwordLines(ES 03-15 (Structural Trading Renko 20 Tick),www.structuraltrading.com,8,0,False,True,True)</div>
                    <LeftChart />
                </div>
                <div className="h-[23px]"><Scrollbar track /></div>
                <div className="h-[5px] border-t border-[#444] bg-[#888]" />
            </div>
            <div className="w-[2px] bg-[#9a9a9a]" />
            <div className="flex flex-1 flex-col">
                <div className="flex h-[10px] items-end justify-end gap-[3px] overflow-hidden bg-[#b3b3b3] pr-[3px]">
                    <div className="flex"><WinBtn>←</WinBtn><WinBtn>L</WinBtn></div>
                    <div className="flex"><WinBtn>_</WinBtn><WinBtn>□</WinBtn><WinBtn>X</WinBtn></div>
                </div>
                <div className="h-[26px] bg-gradient-to-b from-[#f5f4f1] to-[#e9e7e1]" />
                <div className="h-[1011px]"><RightChart /></div>
                <div className="h-[19px]"><Scrollbar track={false} /></div>
                <div className="h-[5px] border-t border-[#444] bg-[#888]" />
            </div>
        </div>
    );
};

export default App;
